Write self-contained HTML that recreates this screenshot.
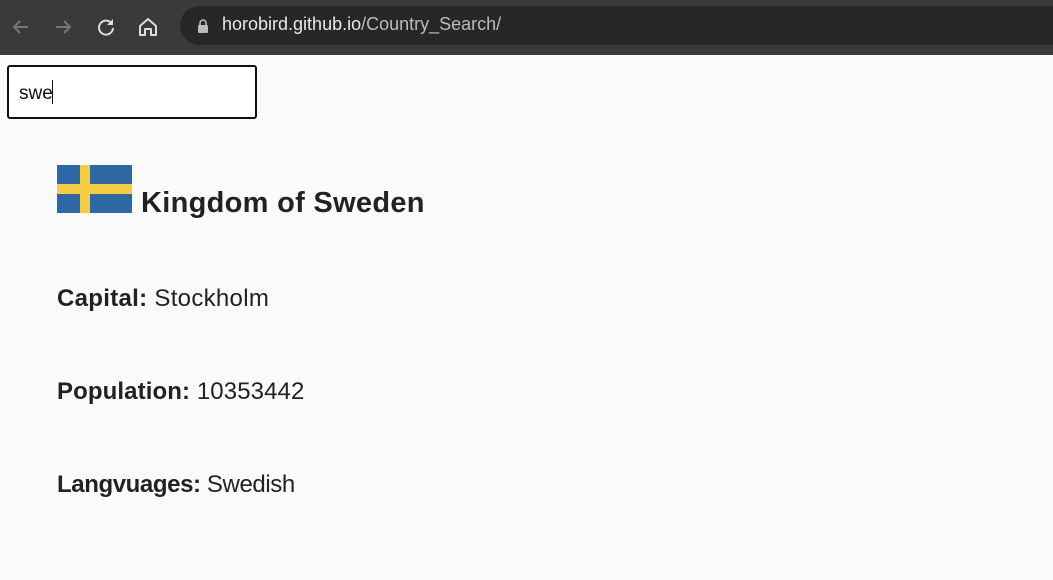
<!DOCTYPE html>
<html><head><style>
body{margin:0;width:1053px;height:580px;background:#fafafa;font-family:"Liberation Sans",sans-serif;color:#222;position:relative;overflow:hidden}
.bar{position:absolute;left:0;top:0;width:1053px;height:55px;background:#3a3a3a}
.addr{position:absolute;left:180px;top:6px;width:900px;height:39px;border-radius:20px;background:#272727}
.url{position:absolute;left:222px;top:14px;font-size:18px;color:#e8e8e8}
.url span{color:#bbb}
.ic{position:absolute;top:16px}
.inp{position:absolute;left:7px;top:65px;width:246px;height:50px;border:2px solid #111;border-radius:3px;background:#fff}
.inp span{position:absolute;left:10px;top:16px;font-size:19px;color:#111}
.cur{position:absolute;left:52px;top:80px;width:1px;height:24px;background:#111}
.t{position:absolute;left:57px;white-space:nowrap;letter-spacing:0.3px}
</style></head><body>
<div class="bar"></div>
<div class="addr"></div>
<svg class="ic" style="left:10px" width="22" height="22" viewBox="0 0 22 22"><path d="M18 11H5M10 5l-6 6 6 6" stroke="#777" stroke-width="2" fill="none"/></svg>
<svg class="ic" style="left:52px" width="22" height="22" viewBox="0 0 22 22"><path d="M4 11h13M12 5l6 6-6 6" stroke="#777" stroke-width="2" fill="none"/></svg>
<svg class="ic" style="left:95px" width="22" height="22" viewBox="0 0 22 22"><path d="M17 8A7 7 0 1 0 18 12" stroke="#ddd" stroke-width="2" fill="none"/><path d="M18 3v6h-6z" fill="#ddd"/></svg>
<svg class="ic" style="left:137px" width="22" height="22" viewBox="0 0 22 22"><path d="M3 10l8-7 8 7v9h-5v-6h-6v6H3z" stroke="#ddd" stroke-width="2" fill="none" stroke-linejoin="round"/></svg>
<svg style="position:absolute;left:197px;top:18px" width="12" height="15" viewBox="0 0 12 15"><path d="M3 7V5a3 3 0 0 1 6 0v2" stroke="#bbb" stroke-width="1.6" fill="none"/><rect x="1" y="7" width="10" height="8" rx="1" fill="#bbb"/></svg>
<div class="url">horobird.github.io<span>/Country_Search/</span></div>
<div class="inp"><span>swe</span></div>
<div class="cur"></div>
<svg style="position:absolute;left:57px;top:165px" width="75" height="48"><rect width="75" height="48" fill="#2e68a3"/><rect x="23" width="10" height="48" fill="#f6cc45"/><rect y="19" width="75" height="10" fill="#f6cc45"/></svg>
<div class="t" style="left:141px;top:187px;font-size:29px;font-weight:bold;letter-spacing:0.3px">Kingdom of Sweden</div>
<div class="t" style="top:285px;font-size:24px"><b>Capital:</b> Stockholm</div>
<div class="t" style="top:378px;font-size:24px;letter-spacing:0.1px"><b>Population:</b> 10353442</div>
<div class="t" style="top:471px;font-size:24px;letter-spacing:-0.4px"><b>Langvuages:</b> Swedish</div>
</body></html>
